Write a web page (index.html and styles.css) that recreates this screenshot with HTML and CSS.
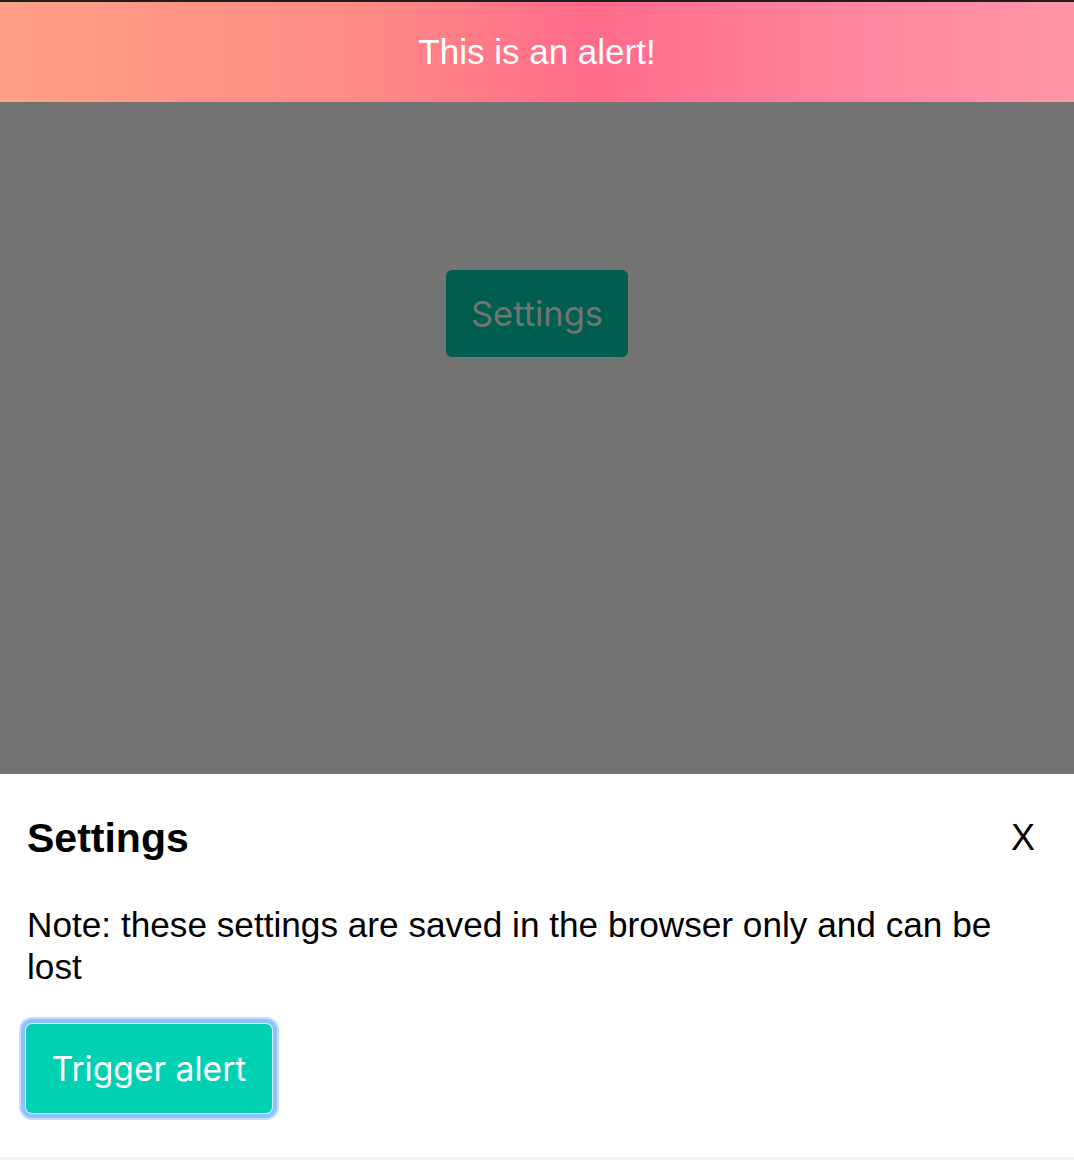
FILE: index.html
```html
<!DOCTYPE html>
<html>
<head>
<meta charset="utf-8">
<link rel="stylesheet" href="styles.css">
</head>
<body>
<div class="topline"></div>
<div class="alert">This is an alert!</div>
<div class="backdrop">
  <button class="btn btn-dim">Settings</button>
</div>
<div class="panel">
  <div class="panel-head">
    <h2 class="panel-title">Settings</h2>
    <button class="close">X</button>
  </div>
  <p class="note">Note: these settings are saved in the browser only and can be lost</p>
  <button class="btn btn-primary focused">Trigger alert</button>
</div>
<div class="bottomline"></div>
</body>
</html>
```
FILE: styles.css
```css
html, body {
  margin: 0;
  padding: 0;
  background: #fff;
}
body {
  font-family: "Liberation Sans", Arial, sans-serif;
  color: #000;
}
.topline {
  height: 2px;
  background: #1e1e1e;
}
.alert {
  height: 100px;
  display: flex;
  align-items: center;
  justify-content: center;
  color: #fff;
  font-size: 35px;
  background: linear-gradient(90deg, #ffa088 0%, #ff8a86 35%, #ff6b8b 55%, #ff86a0 80%, #ff97a8 100%);
}
.backdrop {
  height: 672px;
  background: #737373;
  display: flex;
  justify-content: center;
  align-items: flex-start;
  padding-top: 168px;
  box-sizing: border-box;
}
.btn {
  font-family: Inter, "Noto Sans", sans-serif;
  font-size: 34.5px;
  border: none;
  border-radius: 6px;
  cursor: pointer;
  display: inline-flex;
  align-items: center;
  justify-content: center;
  padding: 0;
}
.btn-dim {
  width: 182px;
  height: 87px;
  background: #005e50;
  color: #737373;
}
.panel {
  height: 383px;
  box-sizing: border-box;
  padding: 30px 39px 0 27px;
}
.panel-head {
  display: flex;
  justify-content: space-between;
  align-items: center;
  height: 68px;
}
.panel-title {
  margin: 0;
  font-size: 41px;
  font-weight: bold;
}
.close {
  background: none;
  border: none;
  padding: 0;
  font-family: "Liberation Sans", Arial, sans-serif;
  font-size: 36px;
  color: #000;
}
.note {
  margin: 32px 0 0 0;
  font-size: 35.2px;
  line-height: 42px;
}
.btn-primary {
  margin-top: 36px;
  margin-left: -1px;
  width: 246px;
  height: 89px;
  font-size: 33.6px;
  background: #00d1b2;
  color: #fff;
  box-shadow: 0 0 0 1px #dcecff, 0 0 0 5px #8cc2ff, 0 0 0 7px #c6deff;
}
.bottomline {
  height: 3px;
  background: #f5f5f5;
}
```
